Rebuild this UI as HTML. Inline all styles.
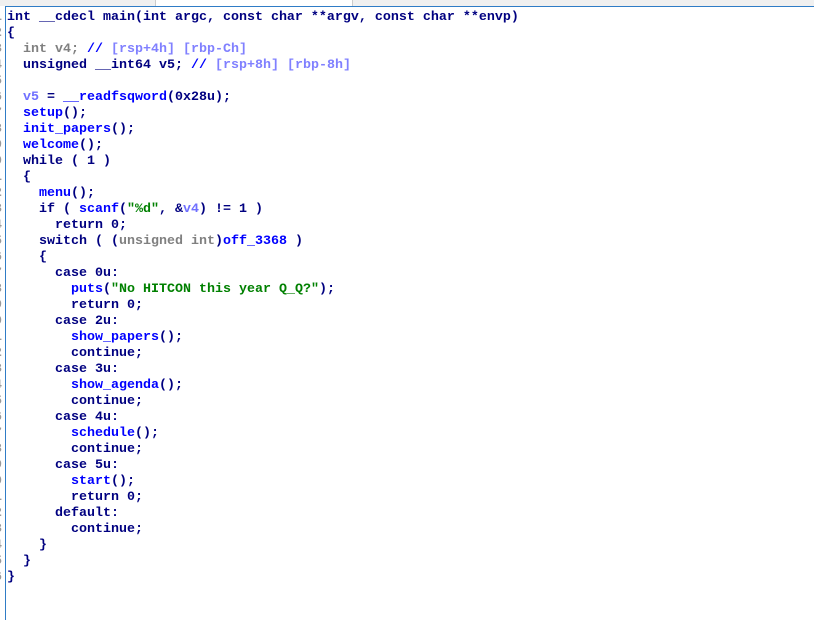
<!DOCTYPE html>
<html><head><meta charset="utf-8"><style>
html,body{margin:0;padding:0;width:814px;height:620px;overflow:hidden;background:#fff}
#bar{position:absolute;left:0;top:0;width:814px;height:6px;background:#f0f0f0}
#tab{position:absolute;left:155px;top:0;width:196px;height:6px;background:#fff;border-left:1px solid #ccc;border-right:1px solid #ccc}
#hl{position:absolute;left:5px;top:6px;width:809px;height:1px;background:#2f7cc6}
#gl{position:absolute;left:5px;top:6px;width:1px;height:614px;background:#2f7cc6}
#gut{position:absolute;left:-6px;top:10px;font:bold 13.33px/16px "Liberation Mono",monospace;color:#999;white-space:pre}
#code{position:absolute;left:7px;top:10px;font:bold 13.33px/16px "Liberation Mono",monospace;color:#000080;white-space:pre}
.g{color:#808080}.c{color:#8080ff}.f{color:#0000ff}.s{color:#008000}.v{color:#7070ff}
</style></head><body>
<div id="bar"></div><div id="tab"></div><div id="hl"></div><div id="gl"></div>
<div id="gut">1
2
3
4
5
6
7
8
9
0
1
2
3
4
5
6
7
8
9
0
1
2
3
4
5
6
7
8
9
0
1
2
3
4
5
6</div>
<div id="code">int __cdecl main(int argc, const char **argv, const char **envp)
{
  <span class="g">int v4;</span> <span class="f">//</span> <span class="c">[rsp+4h] [rbp-Ch]</span>
  unsigned __int64 v5; <span class="f">//</span> <span class="c">[rsp+8h] [rbp-8h]</span>

  <span class="v">v5</span> = <span class="f">__readfsqword</span>(0x28u);
  <span class="f">setup</span>();
  <span class="f">init_papers</span>();
  <span class="f">welcome</span>();
  while ( 1 )
  {
    <span class="f">menu</span>();
    if ( <span class="f">scanf</span>(<span class="s">"%d"</span>, &amp;<span class="v">v4</span>) != 1 )
      return 0;
    switch ( (<span class="g">unsigned int</span>)<span class="f">off_3368</span> )
    {
      case 0u:
        <span class="f">puts</span>(<span class="s">"No HITCON this year Q_Q?"</span>);
        return 0;
      case 2u:
        <span class="f">show_papers</span>();
        continue;
      case 3u:
        <span class="f">show_agenda</span>();
        continue;
      case 4u:
        <span class="f">schedule</span>();
        continue;
      case 5u:
        <span class="f">start</span>();
        return 0;
      default:
        continue;
    }
  }
}</div>
</body></html>
